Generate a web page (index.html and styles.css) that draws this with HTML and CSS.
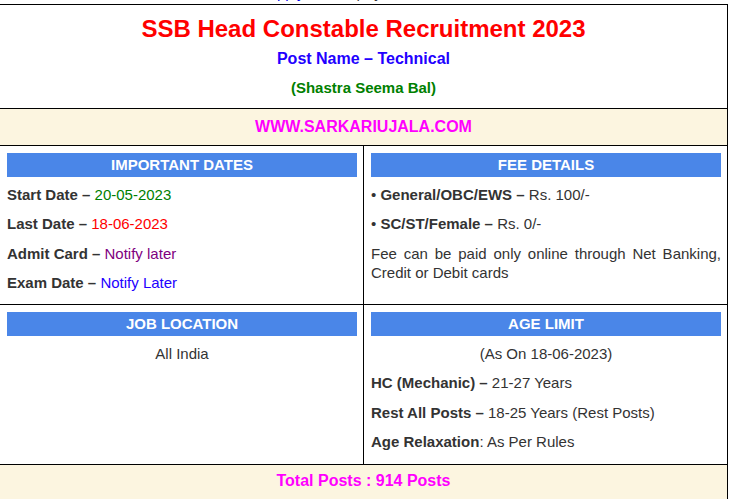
FILE: index.html
```html
<!DOCTYPE html>
<html lang="en">
<head>
<meta charset="utf-8">
<title>SSB Head Constable Recruitment 2023</title>
<link rel="stylesheet" href="styles.css">
</head>
<body>
<div class="topline"><p class="topline-text"><a class="topline-link" href="#">Apply Online</a> | Syllabus</p></div>
<div class="card">
  <div class="head">
    <h1 class="title">SSB Head Constable Recruitment 2023</h1>
    <p class="post">Post Name – Technical</p>
    <p class="org">(Shastra Seema Bal)</p>
  </div>
  <div class="site">WWW.SARKARIUJALA.COM</div>
  <div class="grid">
    <div class="cell cell-left">
      <div class="bar">IMPORTANT DATES</div>
      <p class="row"><b>Start Date –</b> <span class="green">20-05-2023</span></p>
      <p class="row"><b>Last Date –</b> <span class="red">18-06-2023</span></p>
      <p class="row"><b>Admit Card –</b> <span class="purple">Notify later</span></p>
      <p class="row"><b>Exam Date –</b> <span class="blue">Notify Later</span></p>
    </div>
    <div class="cell">
      <div class="bar">FEE DETAILS</div>
      <p class="row">• <b>General/OBC/EWS –</b> Rs. 100/-</p>
      <p class="row">• <b>SC/ST/Female –</b> Rs. 0/-</p>
      <p class="row justify">Fee can be paid only online through Net Banking, Credit or Debit cards</p>
    </div>
  </div>
  <div class="grid grid-second">
    <div class="cell cell-left">
      <div class="bar">JOB LOCATION</div>
      <p class="row center">All India</p>
    </div>
    <div class="cell">
      <div class="bar">AGE LIMIT</div>
      <p class="row center">(As On 18-06-2023)</p>
      <p class="row"><b>HC (Mechanic) –</b> 21-27 Years</p>
      <p class="row"><b>Rest All Posts –</b> 18-25 Years (Rest Posts)</p>
      <p class="row"><b>Age Relaxation</b>: As Per Rules</p>
    </div>
  </div>
  <div class="total">Total Posts : 914 Posts</div>
</div>
</body>
</html>
```
FILE: styles.css
```css
* { box-sizing: border-box; }

body {
  margin: 0;
  font-family: "Liberation Sans", Arial, sans-serif;
  color: #333;
  background: #fff;
}

.topline {
  height: 4px;
  overflow: hidden;
}

.topline-text {
  margin: -15px 0 0;
  padding-left: 267px;
  font-size: 15px;
  line-height: 16px;
  color: #333;
}

.topline-link {
  color: #0000ee;
}

.card {
  border: 1px solid #000;
  margin-left: -1px;
  width: 729px;
}

.head {
  text-align: center;
  padding: 10px 7px 10.5px;
  border-bottom: 1px solid #000;
}

.title {
  margin: 0;
  font-size: 24px;
  line-height: 28px;
  font-weight: bold;
  color: #ff0000;
}

.post {
  margin: 6px 0 0;
  font-size: 16px;
  line-height: 20px;
  font-weight: bold;
  color: #2200ff;
}

.org {
  margin: 8.5px 0 0;
  font-size: 15px;
  line-height: 20px;
  font-weight: bold;
  color: #008000;
}

.site {
  background: #fcf5e0;
  text-align: center;
  color: #ff00ff;
  font-weight: bold;
  font-size: 16px;
  line-height: 20px;
  padding: 8px 7px;
  border-bottom: 1px solid #000;
}

.grid {
  display: grid;
  grid-template-columns: 364px 363px;
  border-bottom: 1px solid #000;
}

.cell {
  padding: 7px 6px 1.5px 7px;
  font-size: 15px;
  line-height: 19.5px;
}

.grid-second .cell {
  padding-bottom: 2.5px;
}

.cell-left {
  border-right: 1px solid #000;
}

.bar {
  background: #4a86e8;
  color: #fff;
  font-weight: bold;
  text-align: center;
  height: 24px;
  line-height: 24px;
  margin-bottom: 7.5px;
}

.row {
  margin: 0 0 10px;
}

.row b {
  color: #333;
}

.center { text-align: center; }
.justify { text-align: justify; }

.green { color: #008000; }
.red { color: #ff0000; }
.purple { color: #800080; }
.blue { color: #2200ff; }

.total {
  background: #fcf5e0;
  text-align: center;
  color: #ff00ff;
  font-weight: bold;
  font-size: 16px;
  line-height: 20px;
  padding: 6px 7px 14px;
}
```
